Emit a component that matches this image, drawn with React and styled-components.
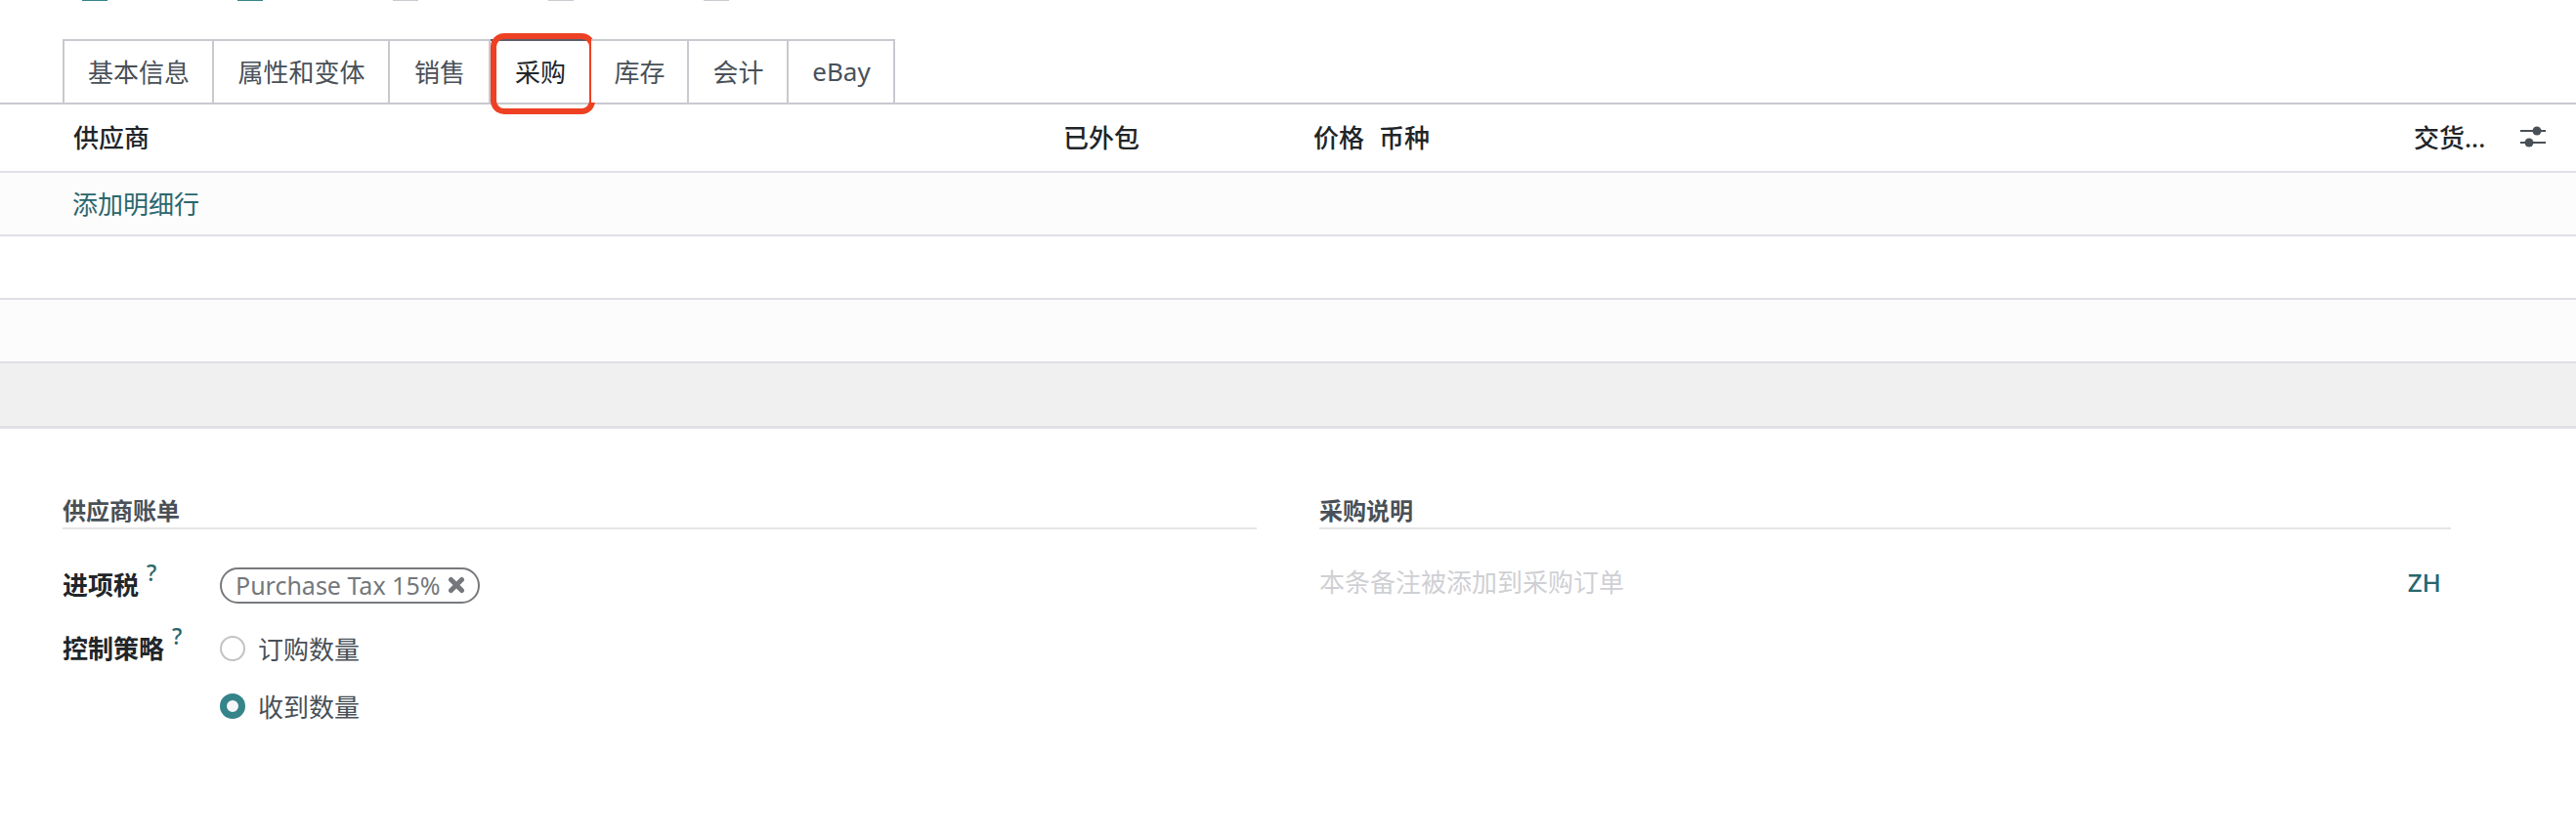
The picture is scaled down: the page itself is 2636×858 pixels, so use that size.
import React from "react";
import styled, { createGlobalStyle } from "styled-components";

const Global = createGlobalStyle`
  html, body { margin: 0; padding: 0; background: #fff; }
  body { font-family: "Noto Sans", "Noto Sans CJK SC", sans-serif; font-size: 26px; color: #212529; }
`;

const Page = styled.div`
  width: 2636px;
  height: 858px;
  overflow: hidden;
  display: flex;
  flex-direction: column;
`;

const TopMarks = styled.div`
  display: flex;
  height: 40px;
  padding-left: 84px;
  gap: 133px;
`;

const Mark = styled.span`
  width: 26px;
  height: 1px;
  background: ${(p) => (p.$active ? "#35848a" : "#c9c9cf")};
`;

const TabBar = styled.div`
  display: flex;
  height: 67px;
  padding-left: 64px;
  border-bottom: 2px solid #c9c9d0;
  box-sizing: border-box;
`;

const Tab = styled.div`
  position: relative;
  box-sizing: border-box;
  width: ${(p) => p.$w}px;
  height: 65px;
  padding: 0 0 2px 1px;
  border: 2px solid #c9c9d0;
  border-left-width: ${(p) => (p.$first ? 2 : 0)}px;
  border-top-color: ${(p) => (p.$active ? "#5b5b68" : "#c9c9d0")};
  border-bottom: 0;
  display: flex;
  align-items: center;
  justify-content: center;
  color: ${(p) => (p.$active ? "#212529" : "#495057")};
  background: #fff;
`;

const Highlight = styled.span`
  position: absolute;
  left: 0;
  right: -6px;
  top: -8px;
  bottom: -12px;
  border: 6px solid #ee4023;
  border-radius: 14px;
`;

const Row = styled.div`
  box-sizing: border-box;
  height: 65px;
  padding: 0 0 2px 74px;
  border-bottom: 2px solid #e0e0e6;
  background: ${(p) => p.$bg || "#fff"};
  display: flex;
  align-items: center;
`;

const HeadRow = styled.div`
  box-sizing: border-box;
  height: 70px;
  padding: 0 0 3px 75px;
  border-bottom: 2px solid #e0e0e6;
  display: grid;
  grid-template-columns: 1013px 256px 67px 1059px 108px 1fr;
  align-items: center;
  font-weight: 500;
  color: #212529;
`;

const BottomRow = styled(Row)`
  height: 67px;
  border-bottom-width: 3px;
`;

const AddLink = styled.span`
  color: #2a666d;
`;

const SlidersIcon = styled.svg`
  display: block;
  width: 28px;
  height: 24px;
`;

const Sections = styled.div`
  display: flex;
  padding: 70px 0 0 64px;
  gap: 64px;
`;

const Section = styled.section`
  width: ${(p) => p.$w}px;
  flex: none;
`;

const SectionTitle = styled.h3`
  margin: 0;
  height: 33px;
  box-sizing: border-box;
  font-size: 24px;
  line-height: 28px;
  font-weight: 700;
  color: #495057;
  border-bottom: 2px solid #e4e4e4;
`;

const Fields = styled.div`
  display: grid;
  grid-template-columns: 161px 1fr;
  padding-top: 38px;
  row-gap: 27px;
`;

const FieldLabel = styled.div`
  font-weight: 700;
  height: 38px;
  line-height: 38px;
  white-space: nowrap;
  color: #212529;
`;

const Help = styled.sup`
  color: #2a666d;
  font-size: 23px;
  font-weight: 500;
  margin-left: 8px;
  line-height: 0;
  vertical-align: 14px;
`;

const TagField = styled.div`
  display: flex;
  align-items: center;
`;

const Tag = styled.span`
  box-sizing: border-box;
  height: 37px;
  width: 266px;
  padding: 0 0 0 14px;
  border: 2px solid #77797d;
  border-radius: 19px;
  display: inline-flex;
  align-items: center;
  gap: 8px;
  font-size: 25px;
  color: #74777b;
  white-space: nowrap;
`;

const Cross = styled.svg`
  width: 18px;
  height: 18px;
  flex: none;
`;

const RadioList = styled.div`
  display: flex;
  flex-direction: column;
  gap: 21px;
`;

const RadioRow = styled.div`
  display: flex;
  align-items: center;
  gap: 13px;
  height: 38px;
  color: #495057;
`;

const Radio = styled.span`
  box-sizing: border-box;
  width: 26px;
  height: 26px;
  border-radius: 50%;
  border: ${(p) => (p.$on ? "7px solid #35848a" : "2px solid #c3c3c3")};
  background: ${(p) => (p.$on ? "#f5f6fa" : "#fff")};
`;

const NoteRow = styled.div`
  display: flex;
  justify-content: space-between;
  padding: 35px 10px 0 0;
  line-height: 38px;
`;

const Placeholder = styled.span`
  color: #cfd0d4;
`;

const Lang = styled.span`
  color: #2a666d;
  font-weight: 500;
`;

const tabs = [
  ["基本信息", 155],
  ["属性和变体", 180],
  ["销售", 103],
  ["采购", 103],
  ["库存", 100],
  ["会计", 102],
  ["eBay", 109],
];

export default function App() {
  return (
    <Page>
      <Global />
      <TopMarks>
        <Mark $active />
        <Mark $active />
        <Mark />
        <Mark />
        <Mark />
      </TopMarks>
      <TabBar>
        {tabs.map(([t, w], i) => (
          <Tab key={t} $w={w} $first={i === 0} $active={t === "采购"}>
            {t}
            {t === "采购" && <Highlight />}
          </Tab>
        ))}
      </TabBar>
      <HeadRow>
        <span>供应商</span>
        <span>已外包</span>
        <span>价格</span>
        <span>币种</span>
        <span>交货...</span>
        <SlidersIcon viewBox="0 0 28 24">
          <g stroke="#495057" strokeWidth="2">
            <path d="M1 6h26M1 18h26" />
          </g>
          <circle cx="18" cy="6" r="4.5" fill="#495057" />
          <circle cx="10" cy="18" r="4.5" fill="#495057" />
        </SlidersIcon>
      </HeadRow>
      <Row $bg="#fcfcfc">
        <AddLink>添加明细行</AddLink>
      </Row>
      <Row />
      <Row $bg="#fcfcfc" />
      <BottomRow $bg="#f0f0f0" />
      <Sections>
        <Section $w={1222}>
          <SectionTitle>供应商账单</SectionTitle>
          <Fields>
            <FieldLabel>
              进项税<Help>?</Help>
            </FieldLabel>
            <TagField>
              <Tag>
                Purchase Tax 15%
                <Cross viewBox="0 0 18 18">
                  <path d="M3.5 3.5l11 11M14.5 3.5l-11 11" stroke="#74777b" strokeWidth="5" strokeLinecap="round" />
                </Cross>
              </Tag>
            </TagField>
            <FieldLabel>
              控制策略<Help>?</Help>
            </FieldLabel>
            <RadioList>
              <RadioRow>
                <Radio />
                订购数量
              </RadioRow>
              <RadioRow>
                <Radio $on />
                收到数量
              </RadioRow>
            </RadioList>
          </Fields>
        </Section>
        <Section $w={1158}>
          <SectionTitle>采购说明</SectionTitle>
          <NoteRow>
            <Placeholder>本条备注被添加到采购订单</Placeholder>
            <Lang>ZH</Lang>
          </NoteRow>
        </Section>
      </Sections>
    </Page>
  );
}
